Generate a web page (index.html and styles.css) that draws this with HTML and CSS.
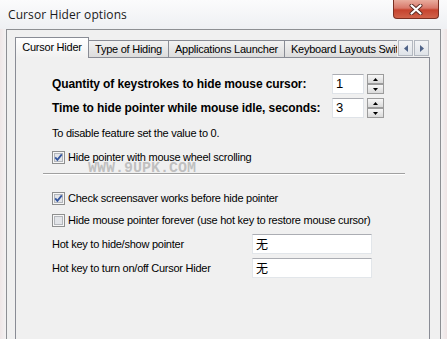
FILE: index.html
```html
<!DOCTYPE html>
<html lang="en">
<head>
    <meta charset="UTF-8">
    <title>Cursor Hider options</title>
    <link rel="stylesheet" href="styles.css">
</head>
<body>
    <div class="window">
        <div class="titlebar">
            <span class="title">Cursor Hider options</span>
            <div class="close">
                <svg width="14" height="11" viewBox="0 0 14 11">
                    <path d="M2.5 1.5 L11.5 9.5 M11.5 1.5 L2.5 9.5" stroke="#5a2a22" stroke-width="4" stroke-linecap="round"/>
                    <path d="M2.5 1.5 L11.5 9.5 M11.5 1.5 L2.5 9.5" stroke="#ffffff" stroke-width="2.2" stroke-linecap="round"/>
                </svg>
            </div>
        </div>

        <div class="client">
            <div class="tabs">
                <div class="tab-strip">
                    <div class="tab tab-active">Cursor Hider</div>
                    <div class="tab tab-type">Type of Hiding</div>
                    <div class="tab tab-apps">Applications Launcher</div>
                    <div class="tab tab-kbd">Keyboard Layouts Switcher</div>
                </div>
                <div class="tab-arrows">
                    <span class="tab-arrow">
                        <svg width="4" height="7" viewBox="0 0 4 7"><path d="M4 0 L0 3.5 L4 7 Z" fill="#4f6388"/></svg>
                    </span>
                    <span class="tab-arrow">
                        <svg width="4" height="7" viewBox="0 0 4 7"><path d="M0 0 L4 3.5 L0 7 Z" fill="#4f6388"/></svg>
                    </span>
                </div>
            </div>

            <div class="panel">
                <div class="row">
                    <span class="label-bold">Quantity of keystrokes to hide mouse cursor:</span>
                    <span class="spin-edit">1</span>
                    <span class="spin">
                        <span class="spin-btn"><svg width="5" height="3" viewBox="0 0 5 3"><path d="M0 3 L2.5 0 L5 3 Z" fill="#000"/></svg></span>
                        <span class="spin-btn"><svg width="5" height="3" viewBox="0 0 5 3"><path d="M0 0 L2.5 3 L5 0 Z" fill="#000"/></svg></span>
                    </span>
                </div>
                <div class="row row-second">
                    <span class="label-bold">Time to hide pointer while mouse idle, seconds:</span>
                    <span class="spin-edit">3</span>
                    <span class="spin">
                        <span class="spin-btn"><svg width="5" height="3" viewBox="0 0 5 3"><path d="M0 3 L2.5 0 L5 3 Z" fill="#000"/></svg></span>
                        <span class="spin-btn"><svg width="5" height="3" viewBox="0 0 5 3"><path d="M0 0 L2.5 3 L5 0 Z" fill="#000"/></svg></span>
                    </span>
                </div>

                <div class="row note">To disable feature set the value to 0.</div>

                <div class="row check check-wheel">
                    <svg class="cb" width="13" height="13" viewBox="0 0 13 13">
                        <rect x="0.5" y="0.5" width="12" height="12" fill="#f6f6f6" stroke="#8e8f8f"/>
                        <rect x="2.5" y="2.5" width="8" height="8" fill="#e2e4e8" stroke="#b4b7bc"/>
                        <path d="M3.2 6.3 L5.4 8.8 L9.8 3.4" fill="none" stroke="#34569f" stroke-width="1.8"/>
                    </svg>
                    <span>Hide pointer with mouse wheel scrolling</span>
                </div>

                <div class="separator"></div>

                <div class="row check check-saver">
                    <svg class="cb" width="13" height="13" viewBox="0 0 13 13">
                        <rect x="0.5" y="0.5" width="12" height="12" fill="#f6f6f6" stroke="#8e8f8f"/>
                        <rect x="2.5" y="2.5" width="8" height="8" fill="#e2e4e8" stroke="#b4b7bc"/>
                        <path d="M3.2 6.3 L5.4 8.8 L9.8 3.4" fill="none" stroke="#34569f" stroke-width="1.8"/>
                    </svg>
                    <span>Check screensaver works before hide pointer</span>
                </div>
                <div class="row check check-forever">
                    <svg class="cb" width="13" height="13" viewBox="0 0 13 13">
                        <rect x="0.5" y="0.5" width="12" height="12" fill="#f6f6f6" stroke="#8e8f8f"/>
                        <rect x="2.5" y="2.5" width="8" height="8" fill="#e2e4e8" stroke="#b4b7bc"/>
                    </svg>
                    <span>Hide mouse pointer forever (use hot key to restore mouse cursor)</span>
                </div>

                <div class="row hotkey hotkey-first">
                    <span class="hotkey-label">Hot key to hide/show pointer</span>
                    <span class="hotkey-edit">无</span>
                </div>
                <div class="row hotkey">
                    <span class="hotkey-label">Hot key to turn on/off Cursor Hider</span>
                    <span class="hotkey-edit">无</span>
                </div>

                <div class="watermark">WWW.9UPK.COM</div>
            </div>
        </div>
    </div>
</body>
</html>
```

FILE: styles.css
```css
body {
    margin: 0;
    padding: 0;
    font-family: "Liberation Sans", Arial, sans-serif;
    font-size: 11px;
    letter-spacing: -0.25px;
    color: #000;
    background-color: #f1eeee;
}

.window {
    width: 447px;
    height: 339px;
    overflow: hidden;
    background: linear-gradient(90deg, #efe6e6 0px, #f3f2f3 6px, #f3f2f3 441px, #efe4e4 447px);
}

/* title bar */

.titlebar {
    height: 29px;
    display: flex;
    align-items: flex-start;
    background: linear-gradient(#fbfbfc, #eef0f3);
}

.title {
    font-family: "Open Sans", "Liberation Sans", sans-serif;
    font-size: 12px;
    letter-spacing: 0.1px;
    color: #1a1a1a;
    padding: 6px 0 0 8px;
}

.close {
    margin-left: auto;
    margin-right: 8px;
    width: 44px;
    height: 18px;
    border: 1px solid #7a2f22;
    border-top: none;
    border-radius: 0 0 4px 4px;
    background: linear-gradient(#e9ad9e 0%, #d8786a 45%, #c6432e 55%, #d0624a 100%);
    display: flex;
    align-items: center;
    justify-content: center;
}

/* client area */

.client {
    margin: 0 6px;
    height: 310px;
    border: 1px solid #8d8f93;
    border-bottom: none;
    background-color: #f0f0f0;
    padding: 7px 10px 0 8px;
}

.tabs {
    display: flex;
    height: 21px;
    position: relative;
    z-index: 1;
}

.tab-strip {
    flex: 1;
    display: flex;
    align-items: flex-end;
    overflow: hidden;
}

.tab {
    box-sizing: border-box;
    height: 17px;
    margin-bottom: 1px;
    border: 1px solid #898c95;
    border-bottom: none;
    background: linear-gradient(#f2f2f2, #dcdcdc);
    line-height: 16px;
    text-align: center;
    white-space: nowrap;
    flex-shrink: 0;
    margin-left: -1px;
}

.tab-active {
    height: 21px;
    margin-bottom: 0;
    margin-left: 0;
    width: 74px;
    line-height: 19px;
    background: linear-gradient(#ffffff, #f0f0f0);
    position: relative;
    z-index: 2;
}

.tab-type {
    width: 81px;
}

.tab-apps {
    width: 117px;
}

.tab-kbd {
    width: 150px;
    text-align: left;
    padding-left: 6px;
}

.tab-arrows {
    display: flex;
    gap: 1px;
    padding: 3px 1px 0 1px;
}

.tab-arrow {
    box-sizing: border-box;
    width: 15px;
    height: 16px;
    border: 1px solid #b3b8c0;
    background: linear-gradient(#f3f4f6, #dfe3e8);
    display: flex;
    align-items: center;
    justify-content: center;
}

/* page */

.panel {
    position: relative;
    margin-top: -1px;
    height: 290px;
    border: 1px solid #898c95;
    border-bottom: none;
    background-color: #f0f0f0;
    padding: 16px 0 0 36px;
}

.row {
    display: flex;
    align-items: center;
    height: 20px;
}

.row-second {
    margin-top: 4px;
}

.label-bold {
    width: 280px;
    font-weight: bold;
    font-size: 12px;
    letter-spacing: -0.1px;
}

.spin-edit {
    box-sizing: border-box;
    width: 32px;
    height: 20px;
    border: 1px solid #dfe3e8;
    border-top-color: #abadb3;
    background-color: #fff;
    font-size: 13px;
    line-height: 18px;
    padding-left: 3px;
}

.spin {
    margin-left: 3px;
    display: flex;
    flex-direction: column;
}

.spin-btn {
    box-sizing: border-box;
    width: 17px;
    height: 10px;
    border: 1px solid #9c9c9c;
    background: linear-gradient(#f7f7f7, #dadada);
    display: flex;
    align-items: center;
    justify-content: center;
}

.note {
    margin-top: 5px;
}

.check {
    gap: 3px;
}

.cb {
    flex-shrink: 0;
}

.check-wheel {
    margin-top: 4px;
}

.separator {
    margin: 6px 0 0 -9px;
    width: 362px;
    height: 1px;
    background-color: #a0a0a0;
    border-bottom: 1px solid #ffffff;
}

.check-saver {
    margin-top: 13px;
}

.check-forever {
    margin-top: 2px;
}

.hotkey-first {
    margin-top: 4px;
}

.hotkey + .hotkey {
    margin-top: 4px;
}

.hotkey-label {
    width: 200px;
}

.hotkey-edit {
    box-sizing: border-box;
    width: 120px;
    height: 20px;
    border: 1px solid #e2e6ea;
    border-top-color: #abadb3;
    background-color: #fff;
    font-family: "Noto Sans CJK SC", sans-serif;
    font-size: 12px;
    line-height: 18px;
    padding-left: 3px;
}

.watermark {
    position: absolute;
    left: 72px;
    top: 102px;
    font-family: "Liberation Mono", monospace;
    font-weight: bold;
    font-size: 15px;
    letter-spacing: 0;
    color: rgba(150, 150, 150, 0.55);
}
```
